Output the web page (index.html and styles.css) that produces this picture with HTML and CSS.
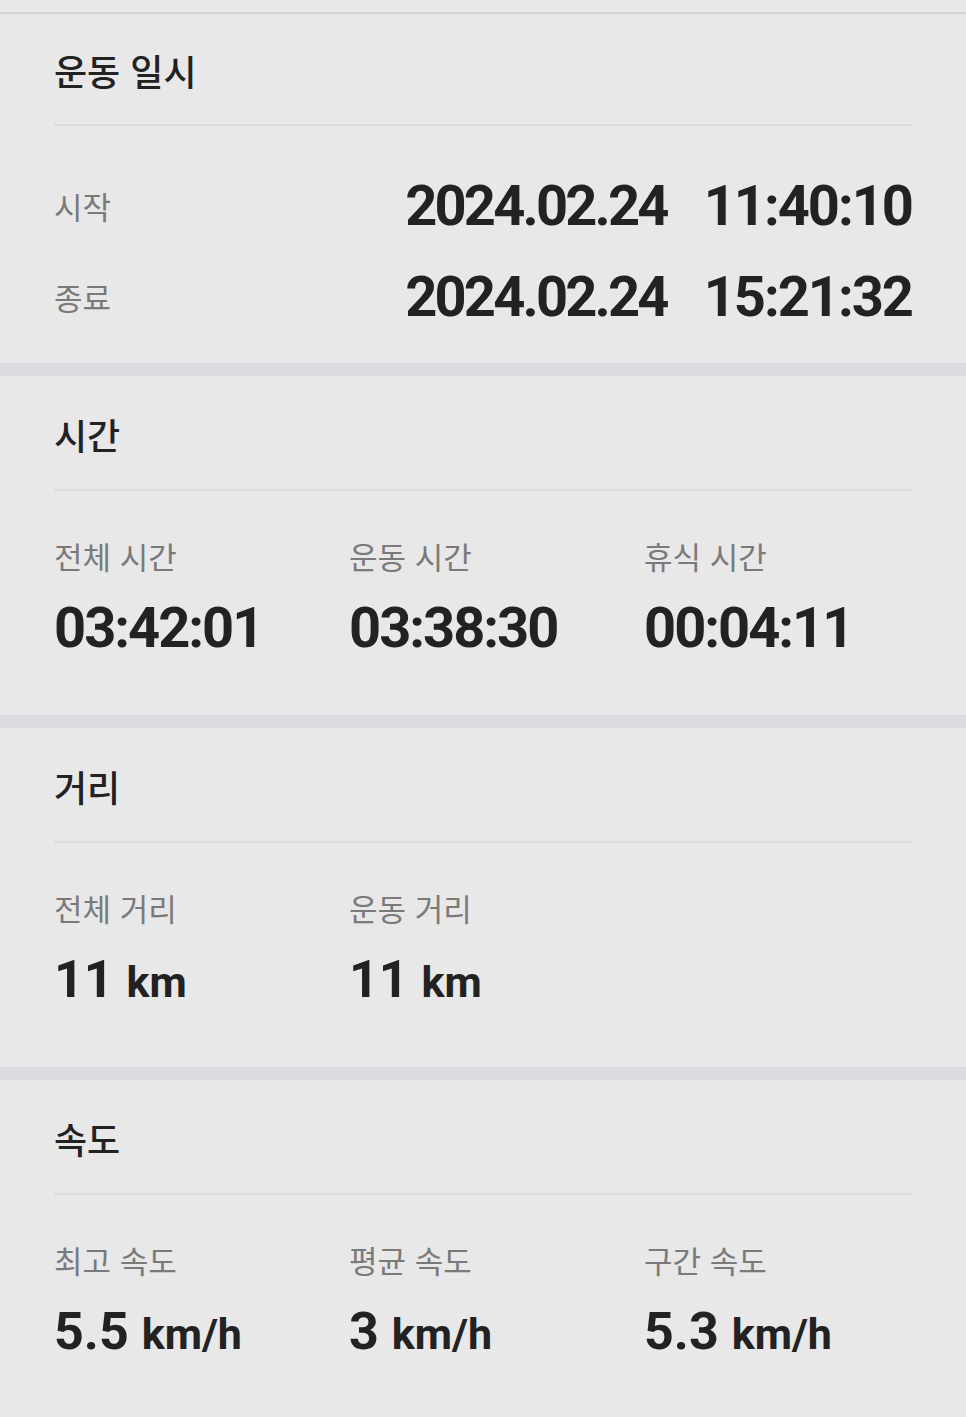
FILE: index.html
```html
<!DOCTYPE html>
<html lang="ko">
<head>
  <meta charset="UTF-8">
  <meta name="viewport" content="width=device-width, initial-scale=1.0">
  <title>운동 기록</title>
  <link rel="stylesheet" href="styles.css">
</head>
<body>

  <section class="card first">
    <h2 class="card-title">운동 일시</h2>
    <div class="rows">
      <div class="row">
        <span class="label">시작</span>
        <span class="stamp"><span class="date">2024.02.24</span><span>11:40:10</span></span>
      </div>
      <div class="row">
        <span class="label">종료</span>
        <span class="stamp"><span class="date">2024.02.24</span><span>15:21:32</span></span>
      </div>
    </div>
  </section>

  <section class="card">
    <h2 class="card-title">시간</h2>
    <div class="stats">
      <div class="stat">
        <span class="label">전체 시간</span>
        <span class="clock">03:42:01</span>
      </div>
      <div class="stat">
        <span class="label">운동 시간</span>
        <span class="clock">03:38:30</span>
      </div>
      <div class="stat">
        <span class="label">휴식 시간</span>
        <span class="clock">00:04:11</span>
      </div>
    </div>
  </section>

  <section class="card">
    <h2 class="card-title">거리</h2>
    <div class="stats">
      <div class="stat">
        <span class="label">전체 거리</span>
        <span class="num">11 <small>km</small></span>
      </div>
      <div class="stat">
        <span class="label">운동 거리</span>
        <span class="num">11 <small>km</small></span>
      </div>
    </div>
  </section>

  <section class="card">
    <h2 class="card-title">속도</h2>
    <div class="stats">
      <div class="stat">
        <span class="label">최고 속도</span>
        <span class="num">5.5 <small>km/h</small></span>
      </div>
      <div class="stat">
        <span class="label">평균 속도</span>
        <span class="num">3 <small>km/h</small></span>
      </div>
      <div class="stat">
        <span class="label">구간 속도</span>
        <span class="num">5.3 <small>km/h</small></span>
      </div>
    </div>
  </section>

</body>
</html>
```

FILE: styles.css
```css
* { margin: 0; padding: 0; box-sizing: border-box; }
body {
  background: #e8e8e8; color: #222;
  font-family: 'Noto Sans CJK KR', 'Noto Sans', sans-serif;
}

.card { border-top: 13px solid #dcdde0; padding: 0 54px 57px; }
.card.first { border-top: 2px solid #d5d5d5; margin-top: 12px; padding-bottom: 36px; }

.card-title {
  font-size: 36px; font-weight: 500; line-height: 40px;
  padding: 38px 0 35px; border-bottom: 2px solid #dcdcdc;
}
.card.first .card-title { padding-top: 36px; padding-bottom: 34px; }

.label { font-size: 31px; line-height: 40px; color: #7a7a7a; font-weight: 400; }

.rows { display: flex; flex-direction: column; gap: 31px; padding-top: 50px; }
.row { display: flex; align-items: center; justify-content: space-between; height: 60px; }

.stamp, .clock {
  font-family: Roboto, 'Liberation Sans', sans-serif;
  font-weight: 700; font-size: 56px; line-height: 60px; letter-spacing: -2px;
  color: #222;
}
.stamp { display: flex; gap: 37px; }
.stamp .date { letter-spacing: -2.8px; }

.stats { display: grid; grid-template-columns: repeat(3, 295px); padding-top: 45px; }
.stat { display: flex; flex-direction: column; gap: 22px; }
.clock, .num { display: block; height: 60px; }

.num {
  font-family: Roboto, 'Liberation Sans', sans-serif;
  font-weight: 700; font-size: 52px; line-height: 60px;
}
.num small { font-size: 43px; font-weight: 700; }
```
